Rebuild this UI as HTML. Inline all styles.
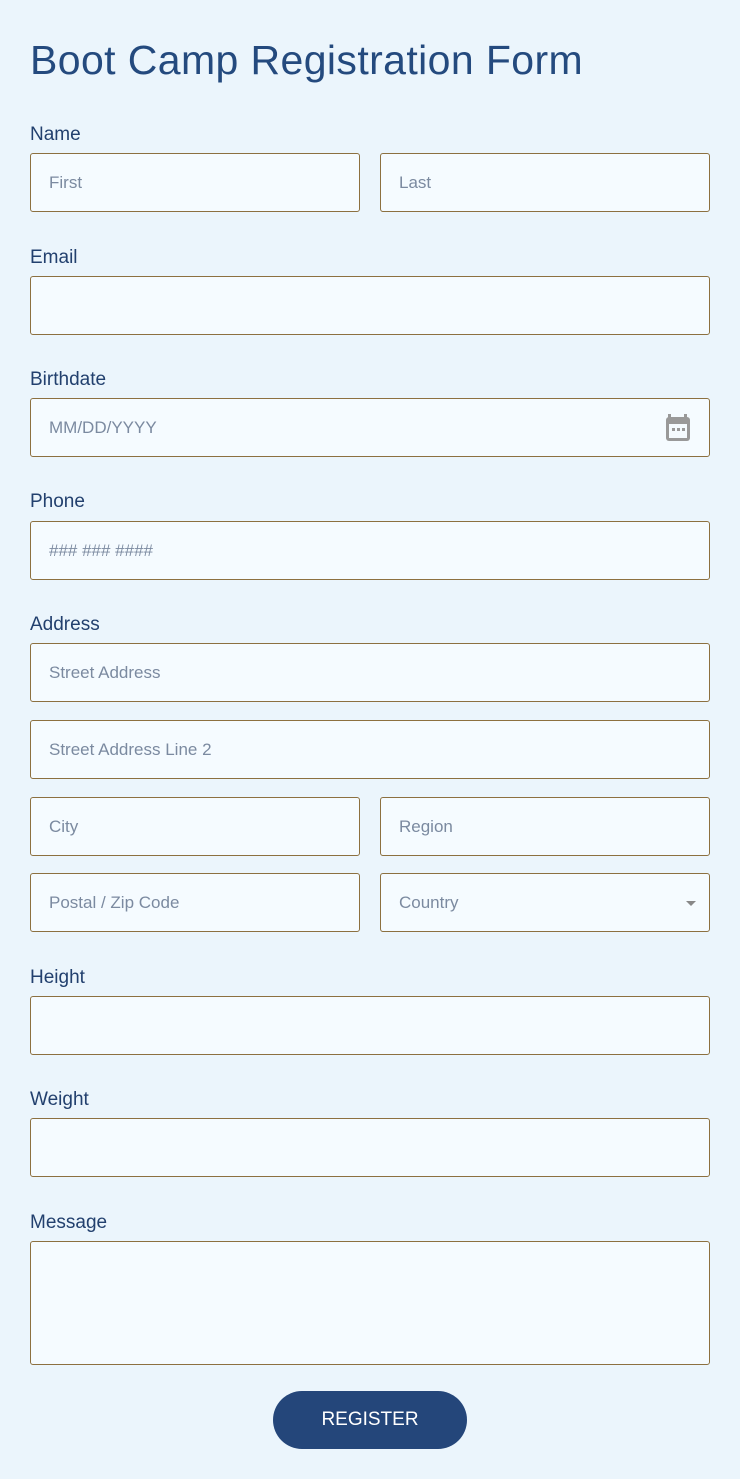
<!DOCTYPE html>
<html><head><style>
*{box-sizing:border-box;margin:0;padding:0}
body{width:740px;height:1479px;background:#ebf5fc;font-family:"Liberation Sans",sans-serif;position:relative;overflow:hidden}
h1{position:absolute;left:30px;top:37px;font-size:41px;letter-spacing:0.4px;font-weight:normal;color:#244a7e;white-space:nowrap}
.l{position:absolute;left:30px;font-size:19px;color:#22406e;line-height:20px}
.i{position:absolute;height:59px;background:#f5fbff;border:1px solid #8c7040;border-radius:3px;font-size:17px;color:#7b8aa0;padding-left:18px;line-height:57px}
.f{left:30px;width:680px}.a{left:30px;width:330px}.b{left:380px;width:330px}
.btn{position:absolute;left:273px;top:1391px;width:194px;height:58px;border-radius:29px;background:#24467a;color:#fff;font-size:19px;text-align:center;line-height:58px}
</style></head><body>
<h1>Boot Camp Registration Form</h1>
<div class="l" style="top:125px">Name</div>
<div class="i a" style="top:153px">First</div><div class="i b" style="top:153px">Last</div>
<div class="l" style="top:248px">Email</div>
<div class="i f" style="top:276px"></div>
<div class="l" style="top:370px">Birthdate</div>
<div class="i f" style="top:398px">MM/DD/YYYY
<svg style="position:absolute;right:18px;top:15px" width="26" height="28" viewBox="0 0 26 28"><rect x="3" y="0" width="3" height="6" fill="#999"/><rect x="19" y="0" width="3" height="6" fill="#999"/><rect x="1" y="3" width="24" height="24" rx="3" fill="#999"/><rect x="4" y="10" width="18" height="14" fill="#f5fbff"/><rect x="7" y="14" width="3" height="3" fill="#999"/><rect x="12" y="14" width="3" height="3" fill="#999"/><rect x="17" y="14" width="3" height="3" fill="#999"/></svg></div>
<div class="l" style="top:492px">Phone</div>
<div class="i f" style="top:521px">### ### ####</div>
<div class="l" style="top:615px">Address</div>
<div class="i f" style="top:643px">Street Address</div>
<div class="i f" style="top:720px">Street Address Line 2</div>
<div class="i a" style="top:797px">City</div><div class="i b" style="top:797px">Region</div>
<div class="i a" style="top:873px">Postal / Zip Code</div><div class="i b" style="top:873px">Country<span style="position:absolute;right:13px;top:27px;border:5px solid transparent;border-top:5px solid #888;border-bottom:0"></span></div>
<div class="l" style="top:968px">Height</div>
<div class="i f" style="top:996px"></div>
<div class="l" style="top:1090px">Weight</div>
<div class="i f" style="top:1118px"></div>
<div class="l" style="top:1213px">Message</div>
<div class="i f" style="top:1241px;height:124px"></div>
<div class="btn">REGISTER</div>
</body></html>
